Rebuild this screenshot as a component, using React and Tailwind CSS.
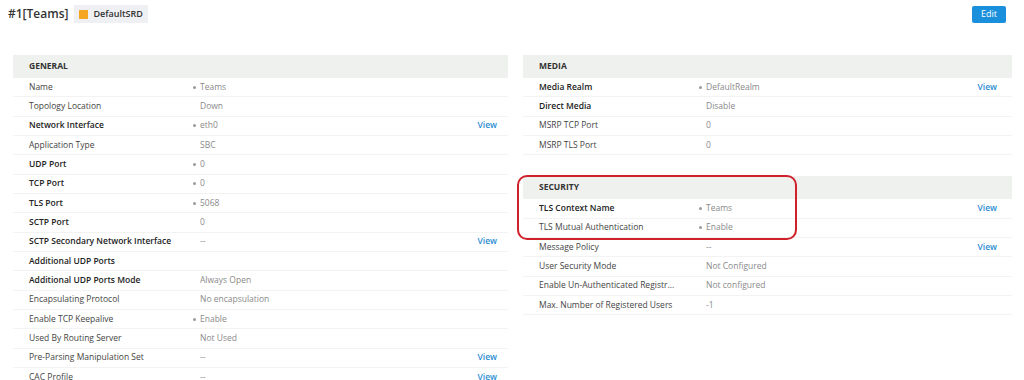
const GENERAL = [
  { label: 'Name', value: 'Teams', dot: true },
  { label: 'Topology Location', value: 'Down' },
  { label: 'Network Interface', value: 'eth0', dot: true, bold: true, view: true },
  { label: 'Application Type', value: 'SBC' },
  { label: 'UDP Port', value: '0', dot: true, bold: true },
  { label: 'TCP Port', value: '0', dot: true, bold: true },
  { label: 'TLS Port', value: '5068', dot: true, bold: true },
  { label: 'SCTP Port', value: '0', bold: true },
  { label: 'SCTP Secondary Network Interface', value: '--', bold: true, view: true },
  { label: 'Additional UDP Ports', value: '', bold: true },
  { label: 'Additional UDP Ports Mode', value: 'Always Open', bold: true },
  { label: 'Encapsulating Protocol', value: 'No encapsulation' },
  { label: 'Enable TCP Keepalive', value: 'Enable', dot: true },
  { label: 'Used By Routing Server', value: 'Not Used' },
  { label: 'Pre-Parsing Manipulation Set', value: '--', view: true },
  { label: 'CAC Profile', value: '--', view: true }
]

const MEDIA = [
  { label: 'Media Realm', value: 'DefaultRealm', dot: true, bold: true, view: true },
  { label: 'Direct Media', value: 'Disable', bold: true },
  { label: 'MSRP TCP Port', value: '0' },
  { label: 'MSRP TLS Port', value: '0' }
]

const SECURITY = [
  { label: 'TLS Context Name', value: 'Teams', dot: true, bold: true, view: true },
  { label: 'TLS Mutual Authentication', value: 'Enable', dot: true },
  { label: 'Message Policy', value: '--', view: true },
  { label: 'User Security Mode', value: 'Not Configured' },
  { label: 'Enable Un-Authenticated Registr...', value: 'Not configured' },
  { label: 'Max. Number of Registered Users', value: '-1' }
]

function SectionHeader({ title }) {
  return (
    <div className="h-[23px] bg-[#eff1ef] flex items-center pl-[16px] text-[8.5px] font-bold text-[#333]">
      {title}
    </div>
  )
}

function Row({ row, labelW, pr }) {
  return (
    <div className={`h-[19.33px] flex items-center border-b border-[#f3f3f3] pl-[16px] ${pr}`}>
      <div
        className={`shrink-0 ${labelW} text-[8.5px] ${row.bold ? 'font-semibold text-[#222]' : 'text-[#444]'}`}
      >
        {row.label}
      </div>
      <div className="w-[7px] shrink-0 flex items-center">
        {row.dot && <span className="w-[3px] h-[3px] rounded-full bg-[#999]" />}
      </div>
      <div className="flex-1 text-[8.5px] text-[#8a8a8a]">{row.value}</div>
      {row.view && (
        <div className="text-[8.5px] font-semibold text-[#2b8bd3]">View</div>
      )}
    </div>
  )
}

export default function App() {
  return (
    <div className="w-[1024px] h-[380px] overflow-hidden bg-white font-['Open_Sans',sans-serif]">

      {/* Top bar */}
      <div className="flex items-center justify-between pl-[8px] pr-[18px] pt-[5px] h-[23px]">
        <div className="flex items-center">
          <span className="text-[12px] font-semibold text-[#333]">#1[Teams]</span>
          <span className="ml-[6px] h-[18px] flex items-center bg-[#eef0f3] px-[5px] text-[9px] font-semibold text-[#333]">
            <span className="w-[9px] h-[9px] bg-[#f5a623] mr-[5px]" />
            DefaultSRD
          </span>
        </div>
        <button className="h-[17px] w-[34px] rounded-[2px] bg-[#1a8fdc] text-white text-[9px]">
          Edit
        </button>
      </div>

      {/* Panels */}
      <div className="flex gap-[15px] pl-[13px] mt-[32px]">

        {/* General */}
        <div className="w-[495px]">
          <SectionHeader title="GENERAL" />
          {GENERAL.map(r => (
            <Row key={r.label} row={r} labelW="w-[164px]" pr="pr-[11px]" />
          ))}
        </div>

        {/* Media + Security */}
        <div className="w-[489px] relative">
          <SectionHeader title="MEDIA" />
          {MEDIA.map(r => (
            <Row key={r.label} row={r} labelW="w-[160px]" pr="pr-[15px]" />
          ))}

          <div className="mt-[21px]">
            <SectionHeader title="SECURITY" />
            {SECURITY.map(r => (
              <Row key={r.label} row={r} labelW="w-[160px]" pr="pr-[15px]" />
            ))}
          </div>

          {/* highlight */}
          <div className="absolute left-[-6px] top-[120px] w-[280px] h-[65px] rounded-[10px] border-[2.5px] border-[#d0212b]" />
        </div>
      </div>
    </div>
  )
}
